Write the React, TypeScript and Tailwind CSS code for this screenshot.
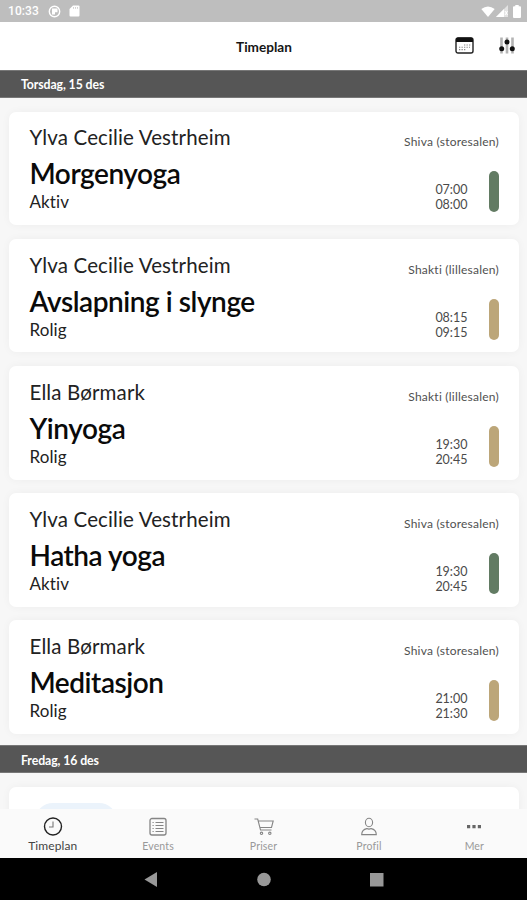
import type { ReactNode } from "react";

type Session = {
  teacher: string;
  title: string;
  level: string;
  room: string;
  start: string;
  end: string;
};

const sessions: Session[] = [
  { teacher: "Ylva Cecilie Vestrheim", title: "Morgenyoga", level: "Aktiv", room: "Shiva (storesalen)", start: "07:00", end: "08:00" },
  { teacher: "Ylva Cecilie Vestrheim", title: "Avslapning i slynge", level: "Rolig", room: "Shakti (lillesalen)", start: "08:15", end: "09:15" },
  { teacher: "Ella Børmark", title: "Yinyoga", level: "Rolig", room: "Shakti (lillesalen)", start: "19:30", end: "20:45" },
  { teacher: "Ylva Cecilie Vestrheim", title: "Hatha yoga", level: "Aktiv", room: "Shiva (storesalen)", start: "19:30", end: "20:45" },
  { teacher: "Ella Børmark", title: "Meditasjon", level: "Rolig", room: "Shiva (storesalen)", start: "21:00", end: "21:30" },
];

function StatusBar() {
  return (
    <div className="flex h-[22px] shrink-0 items-center bg-[#bebebe] pl-[8px] pr-[6px] font-['Roboto',sans-serif] text-white">
      <span className="text-[12px] leading-none font-medium tracking-[0.1px]">10:33</span>
      <svg className="ml-[9px] h-[13px] w-[13px]" viewBox="0 0 13 13">
        <circle cx="6.5" cy="6.5" r="5.2" fill="none" stroke="#fff" strokeWidth="1.4" />
        <path d="M4 3.5h5.5v3.8H7V9.6H4z" fill="#fff" />
      </svg>
      <svg className="ml-[8px] h-[12px] w-[11px]" viewBox="0 0 11 12">
        <path d="M4 0.5h5.5q1 0 1 1v9q0 1-1 1h-8q-1 0-1-1V4z" fill="#fff" />
        <path d="M4.5 2v1.8M6.5 2v1.8M8.5 2v1.8" stroke="#bebebe" strokeWidth="0.7" />
      </svg>
      <svg className="ml-auto h-[11px] w-[14px]" viewBox="0 0 14 11">
        <path d="M0.3 3Q7-2 13.7 3L7 11z" fill="#fff" />
      </svg>
      <svg className="ml-[1px] h-[12px] w-[12px]" viewBox="0 0 12 12">
        <path d="M12 0v12H0z" fill="#fff" opacity="0.55" />
        <path d="M8 4v8H0z" fill="#fff" />
        <path d="M9 6l2.5 4M11.5 6L9 10" stroke="#fff" />
      </svg>
      <svg className="ml-[5px] h-[13px] w-[8px]" viewBox="0 0 8 13">
        <path d="M2.3 0h3.4v1.3H7q1 0 1 1V12q0 1-1 1H1q-1 0-1-1V2.3q0-1 1-1h1.3z" fill="#fff" />
      </svg>
    </div>
  );
}

function Header() {
  return (
    <div className="grid h-[47.5px] shrink-0 grid-cols-[1fr_auto_1fr] items-center bg-white">
      <span />
      <h1 className="pt-[4px] pl-px text-[13.6px] leading-none font-bold text-[#161616]">Timeplan</h1>
      <div className="flex items-center justify-end pr-[12px]">
        <svg className="h-[17px] w-[19px]" viewBox="0 0 19 17">
          <rect x="1" y="1" width="17" height="15" rx="2" fill="none" stroke="#222" strokeWidth="1.4" />
          <path d="M1 2.5q0-2 2-2h13q2 0 2 2V5H1z" fill="#111" />
          <path d="M9 8h1.3M11.5 8h1.3M14 8h1.3M4 10.3h1.3M6.5 10.3h1.3M9 10.3h1.3M11.5 10.3h1.3M14 10.3h1M4 12.6h1.3M6.5 12.6h1.3M9 12.6h1.3" stroke="#888" strokeWidth="1.1" />
        </svg>
        <svg className="ml-[25px] h-[17px] w-[16px]" viewBox="0 0 16 17">
          <path d="M2.5 0.5v16M8 0.5v16M13.5 0.5v16" stroke="#b4b4b4" strokeWidth="2.6" />
          <circle cx="2.7" cy="11.7" r="2.5" fill="#111" />
          <circle cx="8" cy="5" r="2.5" fill="#111" />
          <circle cx="13.3" cy="11.7" r="2.5" fill="#111" />
        </svg>
      </div>
    </div>
  );
}

function DateBar({ label }: { label: string }) {
  return (
    <div className="flex h-[28.5px] shrink-0 items-center border-y border-[#777] bg-[#565656] pt-[3.5px] pl-[21px] text-[12.3px] leading-none font-bold tracking-[-0.1px] text-white">
      {label}
    </div>
  );
}

function SessionCard({ session }: { session: Session }) {
  const color = session.level === "Aktiv" ? "bg-[#627b63]" : "bg-[#bca679]";
  return (
    <div className="flex h-[113.7px] shrink-0 justify-between rounded-[7px] bg-white pt-[13.9px] pr-[20px] pl-[20.5px] text-[#222] shadow-[0_0_8px_rgba(0,0,0,0.045)]">
      <div className="whitespace-nowrap">
        <p className="text-[20.5px] leading-[25px] tracking-[0.13px]">{session.teacher}</p>
        <h2 className="mt-[5px] text-[28px] leading-[36px] font-semibold tracking-[-0.45px] text-[#0a0a0a]">{session.title}</h2>
        <p className="mt-[2px] text-[17px] leading-[18px] tracking-[0.1px]">{session.level}</p>
      </div>
      <div className="flex flex-col items-end whitespace-nowrap">
        <p className="mt-[10px] text-[12px] leading-[14px] tracking-[0.23px] text-[#505050]">{session.room}</p>
        <div className="mt-[22px] flex items-start">
          <div className="mt-[11px] text-[12.5px] leading-[15px] text-[#4a4a4a]">
            <p>{session.start}</p>
            <p>{session.end}</p>
          </div>
          <div className={`ml-[21px] h-[41px] w-[10.5px] rounded-full ${color}`} />
        </div>
      </div>
    </div>
  );
}

function Tab({ label, active, children }: { label: string; active?: boolean; children: ReactNode }) {
  return (
    <div className={`flex flex-1 flex-col items-center pt-[8px] ${active ? "text-[#222]" : "text-[#858585]"}`}>
      <svg className="h-[20px] w-[22px]" viewBox="0 0 22 20" fill="none" stroke="currentColor" strokeWidth="1.1">
        {children}
      </svg>
      <span className={`mt-px leading-[16px] ${active ? "text-[12px] tracking-[0.1px] text-[#444]" : "text-[10.5px] tracking-[0.15px] text-[#999]"}`}>{label}</span>
    </div>
  );
}

function TabBar() {
  return (
    <div className="flex h-[49px] shrink-0 bg-[#fafafa]">
      <Tab label="Timeplan" active>
        <circle cx="11" cy="9.5" r="8.5" strokeWidth="1.4" />
        <path d="M11 4.5v5.5H7" stroke="#777" />
      </Tab>
      <Tab label="Events">
        <rect x="3" y="1.5" width="16" height="16.5" rx="2" strokeWidth="1.3" />
        <path d="M8.5 5.5h8M8.5 8.5h8M8.5 11.5h8M8.5 14.5h8M5.5 5.5h1.2M5.5 8.5h1.2M5.5 11.5h1.2M5.5 14.5h1.2" />
      </Tab>
      <Tab label="Priser">
        <path d="M1.5 2h3.2L7.5 13h11M5.2 4h15L18.5 10.5H7" />
        <circle cx="8.5" cy="16.3" r="1.2" />
        <circle cx="16.8" cy="16.3" r="1.2" />
      </Tab>
      <Tab label="Profil">
        <ellipse cx="11" cy="5.5" rx="3.6" ry="4.2" />
        <path d="M8.8 11.6Q3.8 12.7 3.7 17.6H18.3Q18.2 12.7 13.2 11.6Q11 12.7 8.8 11.6z" />
      </Tab>
      <Tab label="Mer">
        <path d="M4 9.7h3.2M9.4 9.7h3.2M14.8 9.7h3.2" strokeWidth="3.2" stroke="#666" />
      </Tab>
    </div>
  );
}

function SystemNav() {
  return (
    <div className="h-[42px] shrink-0 bg-black">
      <svg className="h-full w-full" viewBox="0 0 527 42" fill="#989898">
        <path d="M157 14v15L144.5 21.5z" />
        <circle cx="264" cy="21.5" r="6.8" />
        <rect x="370" y="15" width="13.5" height="13.5" />
      </svg>
    </div>
  );
}

export default function App() {
  return (
    <div className="flex h-[900px] w-[527px] flex-col overflow-hidden bg-[#f7f7f7] font-['Lato',sans-serif] [font-variant-ligatures:none]">
      <StatusBar />
      <Header />
      <div className="flex min-h-0 flex-1 flex-col overflow-hidden">
        <DateBar label="Torsdag, 15 des" />
        <div className="flex shrink-0 flex-col gap-[13.5px] pt-[13.5px] pr-[8px] pb-[11px] pl-[9px]">
          {sessions.map((session, i) => (
            <SessionCard key={i} session={session} />
          ))}
        </div>
        <DateBar label="Fredag, 16 des" />
        <div className="shrink-0 pt-[13.5px] pr-[8px] pl-[9px]">
          <div className="h-[113px] rounded-[7px] bg-white pt-[16px] pl-[26px] shadow-[0_0_8px_rgba(0,0,0,0.045)]">
            <div className="h-[36px] w-[82px] rounded-full bg-[#ebf3fb]" />
          </div>
        </div>
      </div>
      <TabBar />
      <SystemNav />
    </div>
  );
}
